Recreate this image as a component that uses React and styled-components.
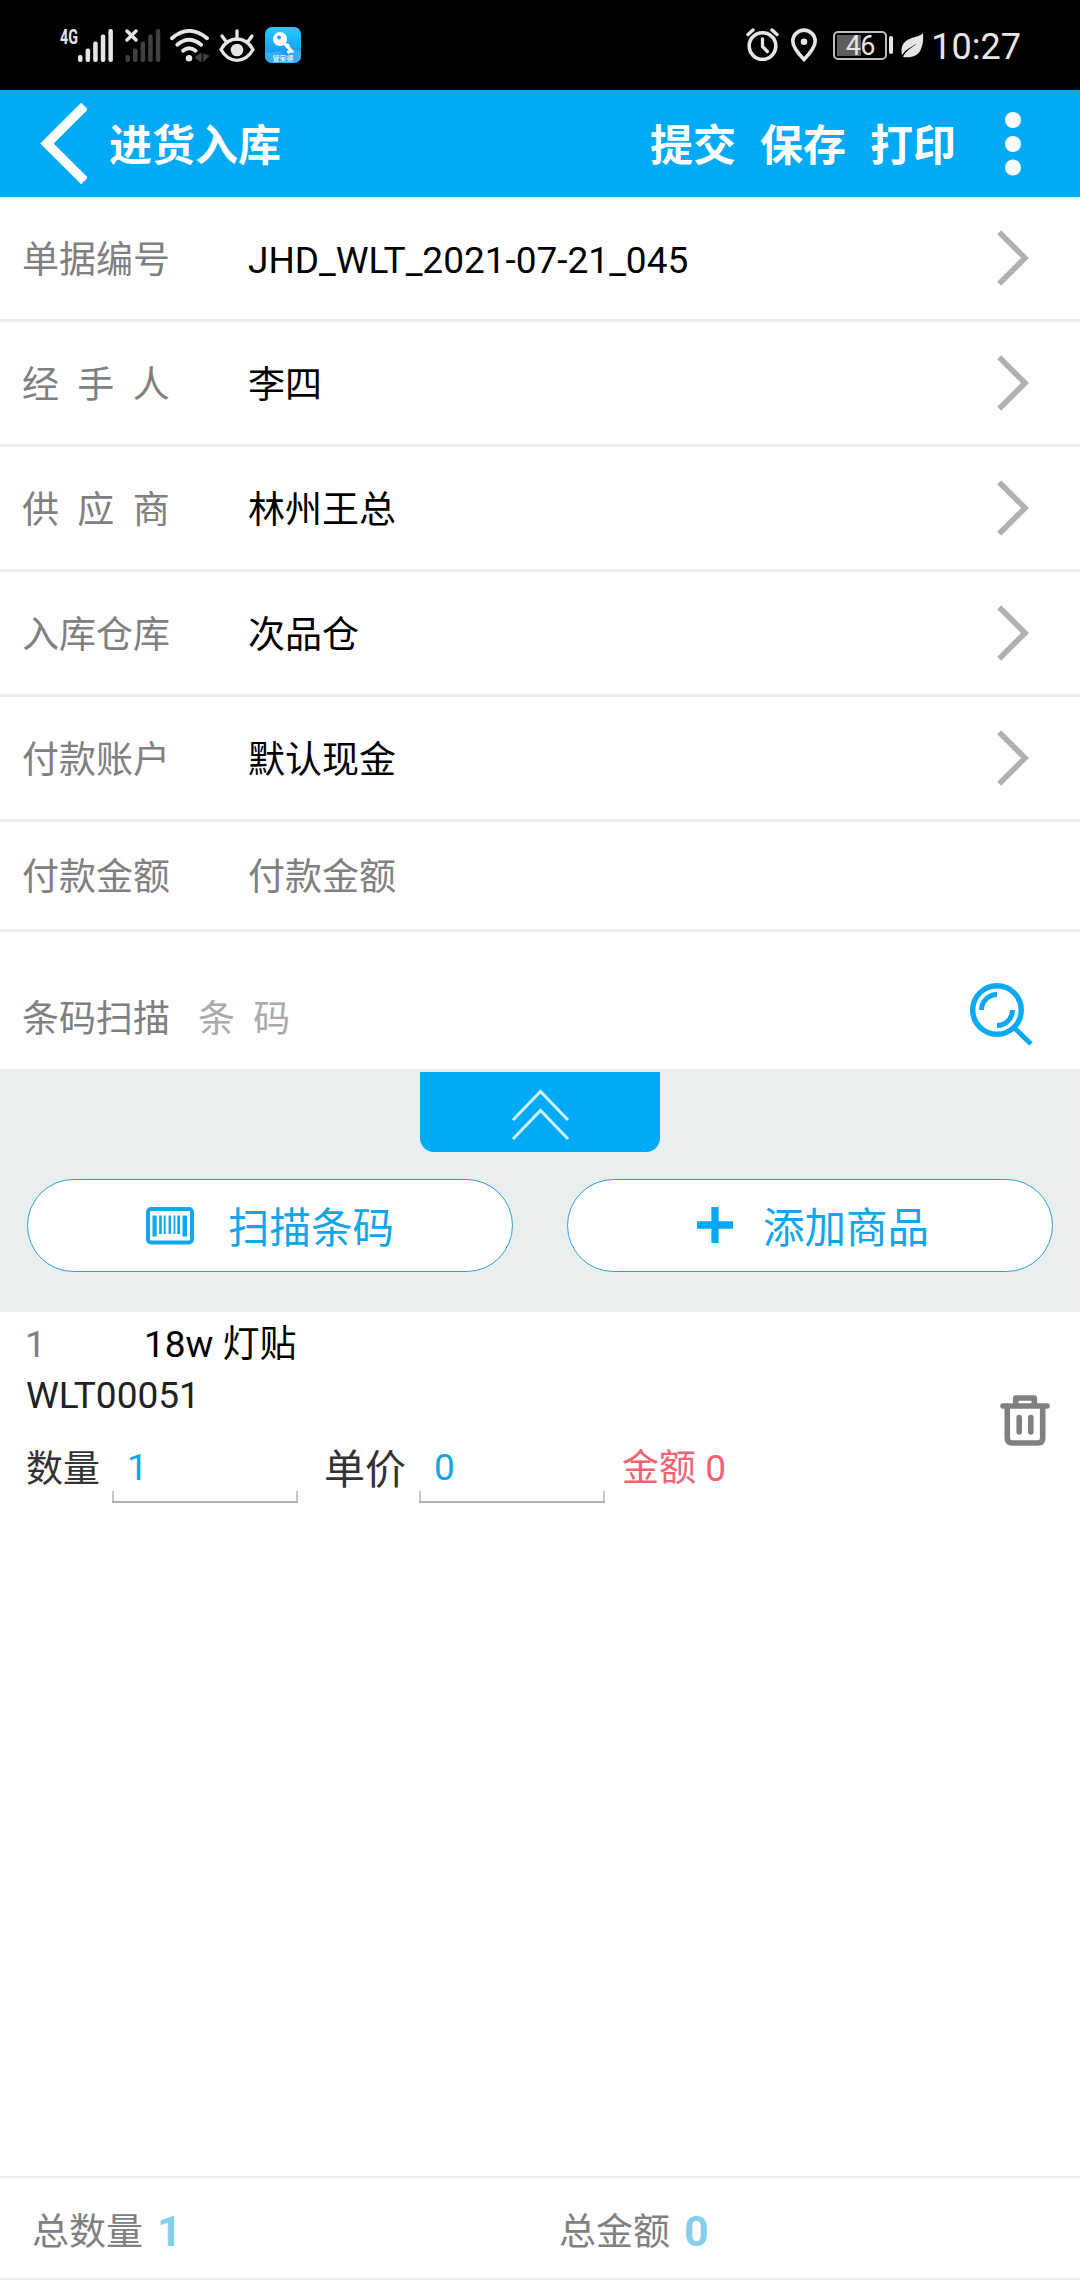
import React from 'react';
import styled, { createGlobalStyle } from 'styled-components';

const rows = [
    { label: '单据编号', value: 'JHD_WLT_2021-07-21_045' },
    { label: '经  手  人', value: '李四' },
    { label: '供  应  商', value: '林州王总' },
    { label: '入库仓库', value: '次品仓' },
    { label: '付款账户', value: '默认现金' },
];

const bars = [[0, 54], [7.6, 47.5], [15.2, 40.5], [22.8, 33.5], [30.4, 28]];

function Signal({ color }) {
    return (
        <g fill={color}>
            {bars.map(([x, top]) => (
                <rect key={x} x={x} y={top - 28} width="4.5" height={61 - top} rx="2" />
            ))}
        </g>
    )
}

function StatusBar() {
    return (
        <Status>
            <Network>4G</Network>
            <Icon width="35" height="33" $gap={0}>
                <Signal color="#e6e6e6" />
            </Icon>
            <Icon width="36" height="33" $gap={12}>
                <g transform="translate(.4 0)"><Signal color="#404040" /></g>
                <path d="M2 2l9 9M11 2l-9 9" stroke="#000" strokeWidth="7" />
                <path d="M2 2l9 9M11 2l-9 9" stroke="#e6e6e6" strokeWidth="3.4" strokeLinecap="round" />
            </Icon>
            <Icon width="39" height="33" $gap={9}>
                <g fill="none" stroke="#e6e6e6" strokeWidth="3.8" strokeLinecap="round">
                    <path d="M2 9.3Q19 -5.5 37 9.3" />
                    <path d="M7.3 15.7Q19 5.7 31.2 15.7" />
                    <path d="M13 21.7Q19 16.8 25.6 21.7" />
                </g>
                <circle cx="19" cy="29.2" r="3.3" fill="#e6e6e6" />
                <path d="M31 24v9l-6-4.500zM33 24v9M34 25l5 2-5 5z" fill="#444" stroke="#444" strokeWidth=".8" />
            </Icon>
            <Icon width="36" height="33" $gap={10}>
                <g fill="none" stroke="#e6e6e6" strokeWidth="3.3" strokeLinecap="round">
                    <path d="M2 20.500Q8 10 18 10T34 20.500Q28 31.300 18 31.300T2 20.500z" />
                    <path d="M18 2V10M3 7l4 5.500M33 7l-4 5.500" />
                </g>
                <circle cx="18" cy="21" r="6.3" fill="#e6e6e6" />
            </Icon>
            <AppBadge>
                <svg width="36" height="36" viewBox="0 0 36 36">
                    <path d="M0 25q5 2 9 0t9 2 9-1 9-1v11H0z" fill="#35aef5" />
                    <circle cx="15" cy="12" r="7" fill="#fff" />
                    <circle cx="14" cy="10.500" r="1.900" fill="#1d9bf5" />
                    <path d="M19 16l9 9.500M24 17.500l-3 3M25 24l-2.500 2" stroke="#fff" strokeWidth="3.200" />
                </svg>
                <BadgeText>管家婆</BadgeText>
            </AppBadge>
            <StatusRight>
                <Icon width="33" height="34" $gap={0}>
                    <g fill="none" stroke="#e6e6e6" strokeLinecap="round">
                        <circle cx="16.500" cy="18" r="13.300" strokeWidth="3.600" />
                        <path d="M16.500 11v7.500l4.800 5" strokeWidth="3.300" />
                        <path d="M2 6.500l5-4.500M31 6.500L26 2" strokeWidth="3.400" />
                    </g>
                </Icon>
                <Icon width="26" height="34" $gap={12}>
                    <path d="M13 31.500Q1.800 20 1.800 13.300a11.200 11.200 0 0 1 22.400 0Q24.200 20 13 31.500z" fill="none" stroke="#e6e6e6" strokeWidth="3.600" />
                    <circle cx="13" cy="13.800" r="3.300" fill="#e6e6e6" />
                </Icon>
                <Battery>46</Battery>
                <BatteryTip />
                <Icon width="23" height="25" $gap={8}>
                    <path d="M22 0C19 5 4 3 .8 14.500c-.6 3-.3 6 .4 7.500C5 16 11 13.500 16 10.500 10 15 4.500 18 2 24c8 1 15-.5 18-8S22 5 22 0z" fill="#e6e6e6" />
                </Icon>
                <Clock>10:27</Clock>
            </StatusRight>
        </Status>
    )
}

function App() {
    return (
        <Page>
            <GlobalStyle />
            <StatusBar />
            <Header>
                <svg width="48" height="84" viewBox="0 0 48 84">
                    <path d="M45.500 4L8 41.500 45.500 79" fill="none" stroke="#fff" strokeWidth="9.500" />
                </svg>
                <Title>进货入库</Title>
                <Action>提交</Action>
                <Action>保存</Action>
                <Action>打印</Action>
                <More width="16" height="64" viewBox="0 0 16 64">
                    <circle cx="8" cy="8" r="8" />
                    <circle cx="8" cy="32" r="8" />
                    <circle cx="8" cy="55.500" r="8" />
                </More>
            </Header>

            {rows.map((row) => (
                <Row key={row.label}>
                    <Label>{row.label}</Label>
                    <Value>{row.value}</Value>
                    <svg width="32" height="56" viewBox="0 0 32 56">
                        <path d="M2.200 2.300L28 28 2.200 53.700" fill="none" stroke="#b1b1b1" strokeWidth="5.600" />
                    </svg>
                </Row>
            ))}
            <Row $height={110}>
                <Label>付款金额</Label>
                <Value $color="#808080">付款金额</Value>
            </Row>
            <ScanRow>
                <ScanLabel>条码扫描</ScanLabel>
                <Placeholder>条  码</Placeholder>
                <svg width="63" height="63" viewBox="0 0 63 63">
                    <g fill="none" stroke="#0aa9f3">
                        <circle cx="27" cy="27" r="24.300" strokeWidth="5.400" />
                        <path d="M11.500 27A15.500 15.500 0 0 1 27 11.500M42.500 27A15.500 15.500 0 0 1 27 42.500" strokeWidth="5" />
                        <path d="M44 44.500l17 16.500" strokeWidth="5" />
                    </g>
                </svg>
            </ScanRow>

            <Tools>
                <Collapse>
                    <svg width="60" height="52" viewBox="0 0 60 52">
                        <path d="M3 31L30.500 2.500 58 31M3 50L30.500 21.500 58 50" fill="none" stroke="#cdf1ff" strokeWidth="3" />
                    </svg>
                </Collapse>
                <Buttons>
                    <Pill $pad={118}>
                        <svg width="48" height="38" viewBox="0 0 48 38">
                            <rect x="2" y="2" width="44" height="33.500" rx="3" fill="none" stroke="#0fa8ee" strokeWidth="4" />
                            <path d="M6.500 8.500h4.200v21H6.500zM13.100 8.500h2.700V27h-2.700zM17.700 8.500h2V27h-2zM22.600 8.500h2.500V27h-2.500zM27.600 8.500h1.800V27h-1.800zM31.300 8.500h2.800V27h-2.800zM36.500 8.500h4.500v21h-4.500z" fill="#0fa8ee" />
                        </svg>
                        <PillText $gap={34}>扫描条码</PillText>
                    </Pill>
                    <Pill $pad={129}>
                        <svg width="36" height="37" viewBox="0 0 36 37">
                            <path d="M0 18h36M18 0v36" stroke="#03a9f4" strokeWidth="7.300" />
                        </svg>
                        <PillText $gap={30}>添加商品</PillText>
                    </Pill>
                </Buttons>
            </Tools>

            <Item>
                <ItemInfo>
                    <ItemLine>
                        <Index>1</Index>
                        <span>18w 灯贴</span>
                    </ItemLine>
                    <Code>WLT00051</Code>
                    <Fields>
                        <FieldName>数量</FieldName>
                        <Field $gap={11}>1</Field>
                        <FieldName $size={41} $gap={26}>单价</FieldName>
                        <Field $gap={13}>0</Field>
                        <Amount>金额 0</Amount>
                    </Fields>
                </ItemInfo>
                <svg width="50" height="51" viewBox="0 0 50 51">
                    <g fill="none" stroke="#808080" strokeWidth="5.600" strokeLinecap="round" strokeLinejoin="round">
                        <path d="M3 11h44M7.300 11v32q0 5 5 5h25.400q5 0 5-5V11" />
                        <path d="M15.700 10V3h18.600v7" />
                        <path d="M19.200 22.500v14.500M30.800 22.500v14.500" />
                    </g>
                </svg>
            </Item>

            <Footer>
                <Total>总数量<Sum>1</Sum></Total>
                <Total>总金额<Sum>0</Sum></Total>
            </Footer>
        </Page>
    )
}

export default App

const GlobalStyle = createGlobalStyle`
    * {
        box-sizing: border-box;
    }

    body {
        margin: 0;
        background: #fff;
    }

    svg {
        display: block;
        flex: none;
    }
`;

const Page = styled.div`
    width: 1080px;
    height: 2280px;
    display: flex;
    flex-direction: column;
    overflow: hidden;
    background: #fefefe;
    color: #000;
    font-family: Roboto, "Noto Sans CJK SC", sans-serif;
    font-size: 37px;
    line-height: 44px;
    white-space: pre;
`;

const Status = styled.div`
    height: 90px;
    flex: none;
    display: flex;
    align-items: center;
    padding: 0 60px;
    background: #000;
    color: #e6e6e6;
`;

const Network = styled.span`
    width: 18px;
    font-size: 21px;
    font-weight: 700;
    line-height: 20px;
    margin-bottom: 17px;
    transform: scaleX(0.68);
    transform-origin: left;
`;

const Icon = styled.svg`
    margin-left: ${(props) => props.$gap}px;
`;

const AppBadge = styled.div`
    position: relative;
    width: 36px;
    height: 36px;
    margin-left: 10px;
    border-radius: 7px;
    overflow: hidden;
    background: linear-gradient(#22cdfb, #1687f3);
`;

const BadgeText = styled.span`
    position: absolute;
    left: 0;
    right: 0;
    bottom: 0;
    text-align: center;
    color: #fff;
    font-size: 7px;
    line-height: 8px;
`;

const StatusRight = styled.div`
    display: flex;
    align-items: center;
    margin-left: auto;
    margin-right: -1px;
`;

const Battery = styled.div`
    width: 54px;
    height: 29px;
    margin-left: 16px;
    border: 2px solid #bdbdbd;
    border-radius: 5px;
    padding: 2px;
    background: linear-gradient(#5e5e5e, #5e5e5e) 2px 2px / 24px 21px no-repeat;
    font-size: 27px;
    line-height: 22px;
    letter-spacing: -0.5px;
    text-align: center;
`;

const BatteryTip = styled.div`
    width: 4px;
    height: 18px;
    margin-left: 2px;
    border-radius: 2px;
    background: #e6e6e6;
`;

const Clock = styled.span`
    margin-left: 7px;
    margin-top: 3px;
    font-size: 36px;
`;

const Header = styled.div`
    height: 107px;
    flex: none;
    display: flex;
    align-items: center;
    padding: 0 59px 0 39px;
    background: #01aaf4;
    color: #fff;
    font-size: 43px;
    font-weight: bold;
`;

const Title = styled.div`
    flex: 1;
    margin-left: 22px;
    padding-top: 5px;
`;

const Action = styled.div`
    margin-right: 24px;
    padding-top: 5px;
`;

const More = styled.svg`
    margin-left: 25px;
    fill: #fff;
`;

const Row = styled.div`
    height: ${(props) => props.$height || 125}px;
    flex: none;
    display: flex;
    align-items: center;
    padding: 0 51px 0 22px;
    border-bottom: 3px solid #e9eded;
`;

const Label = styled.div`
    width: 226px;
    padding-top: 5px;
    color: #808080;
`;

const Value = styled.div`
    flex: 1;
    padding-top: 5px;
    color: ${(props) => props.$color || '#000'};
`;

const ScanRow = styled.div`
    height: 137px;
    flex: none;
    display: flex;
    align-items: center;
    padding: 28px 47px 0 22px;
`;

const ScanLabel = styled.div`
    width: 176px;
    padding-top: 10px;
    color: #808080;
`;

const Placeholder = styled.div`
    flex: 1;
    padding-top: 10px;
    color: #aaa;
`;

const Tools = styled.div`
    height: 243px;
    flex: none;
    padding-top: 3px;
    background: #e9eeef;
`;

const Collapse = styled.div`
    width: 240px;
    height: 80px;
    margin: 0 auto 27px;
    padding-top: 5px;
    display: flex;
    align-items: center;
    justify-content: center;
    border-radius: 0 0 14px 14px;
    background: #01aaf4;
`;

const Buttons = styled.div`
    display: flex;
    justify-content: space-between;
    padding: 0 27px;
`;

const Pill = styled.div`
    width: 486px;
    height: 93px;
    display: flex;
    align-items: center;
    padding-left: ${(props) => props.$pad}px;
    border: 1px solid #2a9fd6;
    border-radius: 47px;
    background: #fff;
    color: #12a5e8;
`;

const PillText = styled.span`
    margin-left: ${(props) => props.$gap}px;
    padding-top: 7px;
    font-size: 41.5px;
`;

const Item = styled.div`
    flex: 1;
    display: flex;
    align-items: flex-start;
    padding: 11px 30px 0 26px;

    > svg {
        margin-top: 72px;
    }
`;

const ItemInfo = styled.div`
    flex: 1;
`;

const ItemLine = styled.div`
    display: flex;
    height: 51px;
`;

const Index = styled.span`
    width: 119px;
    margin-left: -1px;
    color: #808080;
`;

const Code = styled.div`
    height: 65px;
    color: #212121;
`;

const Fields = styled.div`
    display: flex;
    height: 64px;
    align-items: flex-start;
    color: #333;
`;

const FieldName = styled.span`
    width: ${(props) => (props.$size ? 82 : 75)}px;
    margin-left: ${(props) => props.$gap || 0}px;
    padding-top: 9px;
    font-size: ${(props) => props.$size || 37}px;
`;

const Field = styled.div`
    width: 186px;
    height: 64px;
    margin-left: ${(props) => props.$gap}px;
    padding: 7px 15px 0;
    color: #16a5e6;
    background:
        linear-gradient(#b0b0b0, #b0b0b0) bottom / 100% 2px no-repeat,
        linear-gradient(#c8c8c8, #c8c8c8) left bottom / 2px 12px no-repeat,
        linear-gradient(#c8c8c8, #c8c8c8) right bottom / 2px 12px no-repeat;
`;

const Amount = styled.span`
    margin-left: 17px;
    padding-top: 8px;
    color: #ef6373;
`;

const Footer = styled.div`
    height: 104px;
    flex: none;
    display: flex;
    align-items: center;
    padding-left: 32px;
    border-top: 2px solid #e9eded;
    border-bottom: 2px solid #e9eded;
    color: #808080;
`;

const Total = styled.div`
    width: 527px;
    flex: none;
    padding-top: 10px;
    display: flex;
    align-items: center;
`;

const Sum = styled.span`
    margin: -5px 0 0 14px;
    font-size: 43px;
    font-weight: bold;
    color: #87ceeb;
`;
